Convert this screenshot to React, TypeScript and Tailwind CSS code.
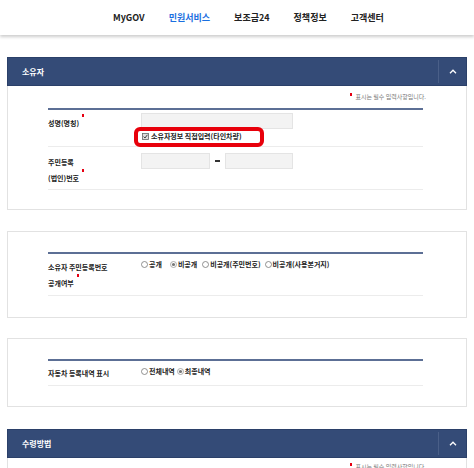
import React from "react";

const Star = () => (
  <span className="inline-block align-top w-[2px] h-[3px] bg-[#e60012] ml-[3px] mt-[-1px]" />
);

const Radio = ({ checked }: { checked?: boolean }) => (
  <svg width="7" height="7" viewBox="0 0 7 7" className="shrink-0">
    <circle cx="3.5" cy="3.5" r="3" fill="#fff" stroke={checked ? "#999" : "#777"} strokeWidth="0.8" />
    {checked && <circle cx="3.5" cy="3.5" r="1.6" fill="#777" />}
  </svg>
);

const Check = () => (
  <svg width="7" height="7" viewBox="0 0 7 7" className="shrink-0">
    <rect x="0.5" y="0.5" width="6" height="6" fill="#ddd" stroke="#666" strokeWidth="0.8" />
    <polyline points="1.6,3.6 3,5 5.4,1.8" fill="none" stroke="#333" strokeWidth="0.9" />
  </svg>
);

const PanelHeader = ({ title }: { title: string }) => (
  <div className="h-[29px] bg-[#344b77] border border-[#2b4069] flex items-center">
    <span className="pl-[14px] text-white text-[8px] font-bold leading-none">{title}</span>
    <div className="ml-auto flex h-full items-center">
      <div className="w-px h-[23px] bg-[#4a5f88]" />
      <div className="w-[27px] flex items-center justify-center">
        <svg width="8" height="5" viewBox="0 0 8 5">
          <polyline points="1,4.2 4,1.2 7,4.2" fill="none" stroke="#fff" strokeWidth="1.3" />
        </svg>
      </div>
    </div>
  </div>
);

const Note = ({ h }: { h: string }) => (
  <div className={`${h} flex items-center justify-end pr-[40px]`}>
    <span className="inline-block w-[2px] h-[3px] bg-[#e60012] mr-[3px] mb-[5px]" />
    <span className="text-[6px] text-[#777] leading-none">표시는 필수 입력사항입니다.</span>
  </div>
);

const Input = ({ w }: { w: string }) => (
  <div className={`${w} h-[16px] bg-[#f3f3f3] border border-[#e4e4e4]`} />
);

export default function App() {
  return (
    <div className="w-[474px] h-[468px] overflow-hidden bg-white font-['Noto_Sans_CJK_KR','Noto_Sans',sans-serif] text-[#222]">
      <header className="h-[35px] flex items-center pl-[113px] gap-[24px] shadow-[0_2px_3px_rgba(0,0,0,0.2)] text-[9px] font-bold text-[#222]">
        <span>MyGOV</span>
        <span className="text-[#1a6fe0]">민원서비스</span>
        <span>보조금24</span>
        <span>정책정보</span>
        <span>고객센터</span>
      </header>

      <div className="px-[7px] pt-[22px] flex flex-col">
        {/* Panel 1 */}
        <section>
          <PanelHeader title="소유자" />
          <div className="border-x border-b border-[#e2e2e2] pb-[19px]">
            <Note h="h-[22px]" />
            <div className="ml-[40px] w-[375px] border-t-2 border-[#5c6f95]">
              <div className="grid grid-cols-[93px_1fr] h-[37px] border-b border-[#ececec]">
                <div className="pt-[5px] text-[7px] font-bold leading-[16px]">
                  성명(명칭)
                  <Star />
                </div>
                <div className="pt-[3px] relative">
                  <Input w="w-[152px]" />
                  <div className="mt-[2px] h-[10px] flex items-center gap-[2px] pl-[1px] text-[7px] font-bold">
                    <Check />
                    <span>소유자정보 직접입력(타인차량)</span>
                  </div>
                  <div className="absolute left-[-7px] top-[17px] w-[130px] h-[20px] border-[4px] border-[#e8000b] rounded-[6px]" />
                </div>
              </div>
              <div className="grid grid-cols-[93px_1fr] h-[43px] border-b border-[#ececec]">
                <div className="pt-[7px] text-[7px] font-bold leading-[16px]">
                  주민등록
                  <br />
                  (법인)번호
                  <Star />
                </div>
                <div className="pt-[6px] flex items-start">
                  <Input w="w-[69px]" />
                  <div className="w-[15px] h-[16px] flex items-center justify-center">
                    <div className="w-[5px] h-[2px] bg-[#333]" />
                  </div>
                  <Input w="w-[68px]" />
                </div>
              </div>
            </div>
          </div>
        </section>

        {/* Panel 2 */}
        <section className="mt-[21px] border border-[#e2e2e2] pt-[20px] pb-[21px]">
          <div className="ml-[40px] w-[375px] border-t-2 border-[#5c6f95]">
            <div className="grid grid-cols-[93px_1fr] border-b border-[#ececec] pb-[4px]">
              <div className="pt-[5px] text-[7px] font-bold leading-[16px]">
                소유자 주민등록번호
                <br />
                공개여부
                <Star />
              </div>
              <div className="pt-[5px] h-[15px] flex items-center text-[7px] font-bold leading-[10px]">
                <span className="flex items-center gap-[1px]"><Radio /><span>공개</span></span>
                <span className="ml-[8px] flex items-center gap-[1px]"><Radio checked /><span>비공개</span></span>
                <span className="ml-[5px] flex items-center gap-[1px]"><Radio /><span>비공개(주민번호)</span></span>
                <span className="ml-[4px] flex items-center gap-[1px]"><Radio /><span>비공개(사용본거지)</span></span>
              </div>
            </div>
          </div>
        </section>

        {/* Panel 3 */}
        <section className="mt-[20px] border border-[#e2e2e2] pt-[20px] pb-[20px]">
          <div className="ml-[40px] w-[375px] border-t-2 border-[#5c6f95]">
            <div className="grid grid-cols-[93px_1fr] border-b border-[#ececec] pb-[4px]">
              <div className="pt-[4px] text-[7px] font-bold leading-[16px]">자동차 등록내역 표시</div>
              <div className="pt-[5px] h-[15px] flex items-center text-[7px] font-bold leading-[10px]">
                <span className="flex items-center gap-[1px]"><Radio /><span>전체내역</span></span>
                <span className="ml-[2px] flex items-center gap-[1px]"><Radio checked /><span>최종내역</span></span>
              </div>
            </div>
          </div>
        </section>

        {/* Panel 4 */}
        <section className="mt-[22px]">
          <PanelHeader title="수령방법" />
          <div className="border-x border-[#e2e2e2]">
            <Note h="h-[18px]" />
          </div>
        </section>
      </div>
    </div>
  );
}
